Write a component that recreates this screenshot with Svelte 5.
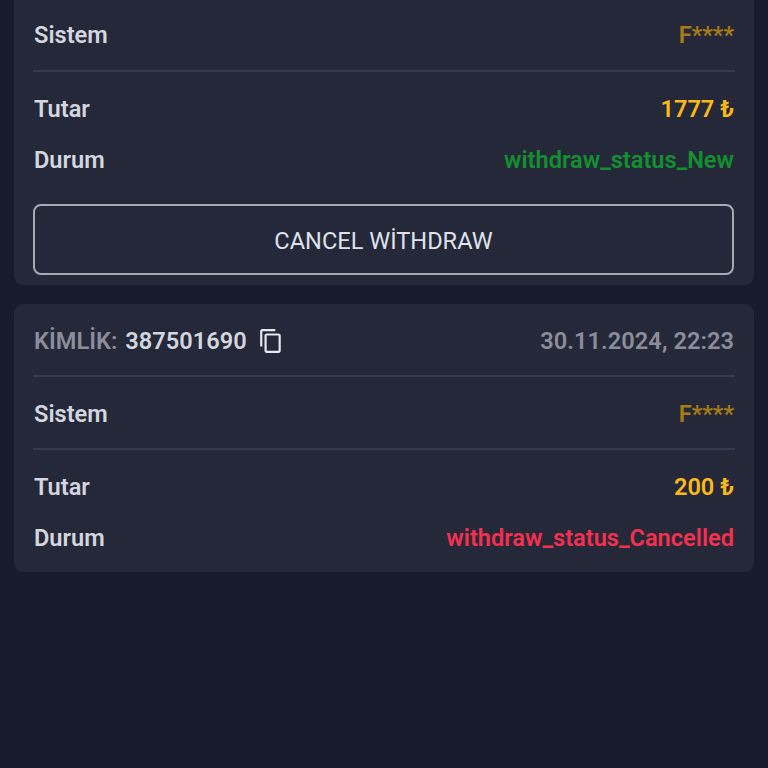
<script lang="ts">
  const cards = [
    { id: null, date: null, amount: "1777 ₺", status: "withdraw_status_New", tone: "new", cancel: true },
    { id: "387501690", date: "30.11.2024, 22:23", amount: "200 ₺", status: "withdraw_status_Cancelled", tone: "cancelled", cancel: false },
  ];
</script>

<div class="page">
  {#each cards as c}
    <section class="card" class:cut={!c.id}>
      {#if c.id}
        <div class="row head">
          <div class="id">
            <span class="id-label">KİMLİK:</span>
            <span class="id-value">{c.id}</span>
            <svg class="copy" viewBox="0 0 24 24" width="26" height="26" fill="currentColor" aria-hidden="true">
              <path d="M16 1H4c-1.100 0-2 .9-2 2v14h2V3h12V1zm3 4H8c-1.100 0-2 .9-2 2v14c0 1.100.9 2 2 2h11c1.100 0 2-.9 2-2V7c0-1.100-.9-2-2-2zm0 16H8V7h11v14z" />
            </svg>
          </div>
          <span class="date">{c.date}</span>
        </div>
      {/if}
      <div class="row system">
        <span class="label">Sistem</span>
        <span class="masked">F****</span>
      </div>
      <div class="details">
        <div class="line">
          <span class="label">Tutar</span>
          <span class="amount">{c.amount}</span>
        </div>
        <div class="line">
          <span class="label">Durum</span>
          <span class={c.tone}>{c.status}</span>
        </div>
      </div>
      {#if c.cancel}
        <button class="cancel" type="button">CANCEL WİTHDRAW</button>
      {/if}
    </section>
  {/each}
</div>

<style>
  :global(body) { background: #171c2c; }
  .page {
    height: 768px;
    overflow: hidden;
    padding: 0 14px;
    display: flex;
    flex-direction: column;
    gap: 19px;
    background: #171c2c;
    font-family: Roboto, "Noto Sans", sans-serif;
    font-size: 23.6px;
    font-weight: 600;
    box-sizing: border-box;
  }
  .card {
    background: #252838;
    border-radius: 9px;
    padding: 0 19px 9px;
  }
  .card.cut { border-radius: 0 0 9px 9px; padding-bottom: 10px; }
  .row {
    display: flex;
    align-items: center;
    justify-content: space-between;
    box-sizing: border-box;
    height: 73px;
    padding: 2px 1px 0;
    border-bottom: 2px solid #363a4a;
  }
  .cut .row { height: 72px; padding-top: 0; }
  .id { display: flex; align-items: center; }
  .id-label { color: #8b8d9a; margin-right: 8px; }
  .id-value { color: #d3d5df; }
  .copy { color: #e6e8f0; margin-left: 11px; }
  .date { color: #8b8d9a; letter-spacing: 0.05px; }
  .label { color: #d3d5df; }
  .masked { color: #a87c12; }
  .details { padding-top: 11px; }
  .line {
    display: flex;
    align-items: center;
    justify-content: space-between;
    height: 51px;
    padding: 0 1px;
  }
  .amount { color: #fbb918; }
  .new { color: #129030; }
  .cancelled { color: #f4304f; }
  .cancel {
    display: block;
    width: 701px;
    height: 71px;
    margin-top: 19px;
    padding: 2px 0 0;
    background: transparent;
    border: 2px solid #a6a8b4;
    border-radius: 8px;
    color: #dfe1ea;
    font-family: inherit;
    font-size: 23.6px;
    font-weight: 400;
  }
</style>
